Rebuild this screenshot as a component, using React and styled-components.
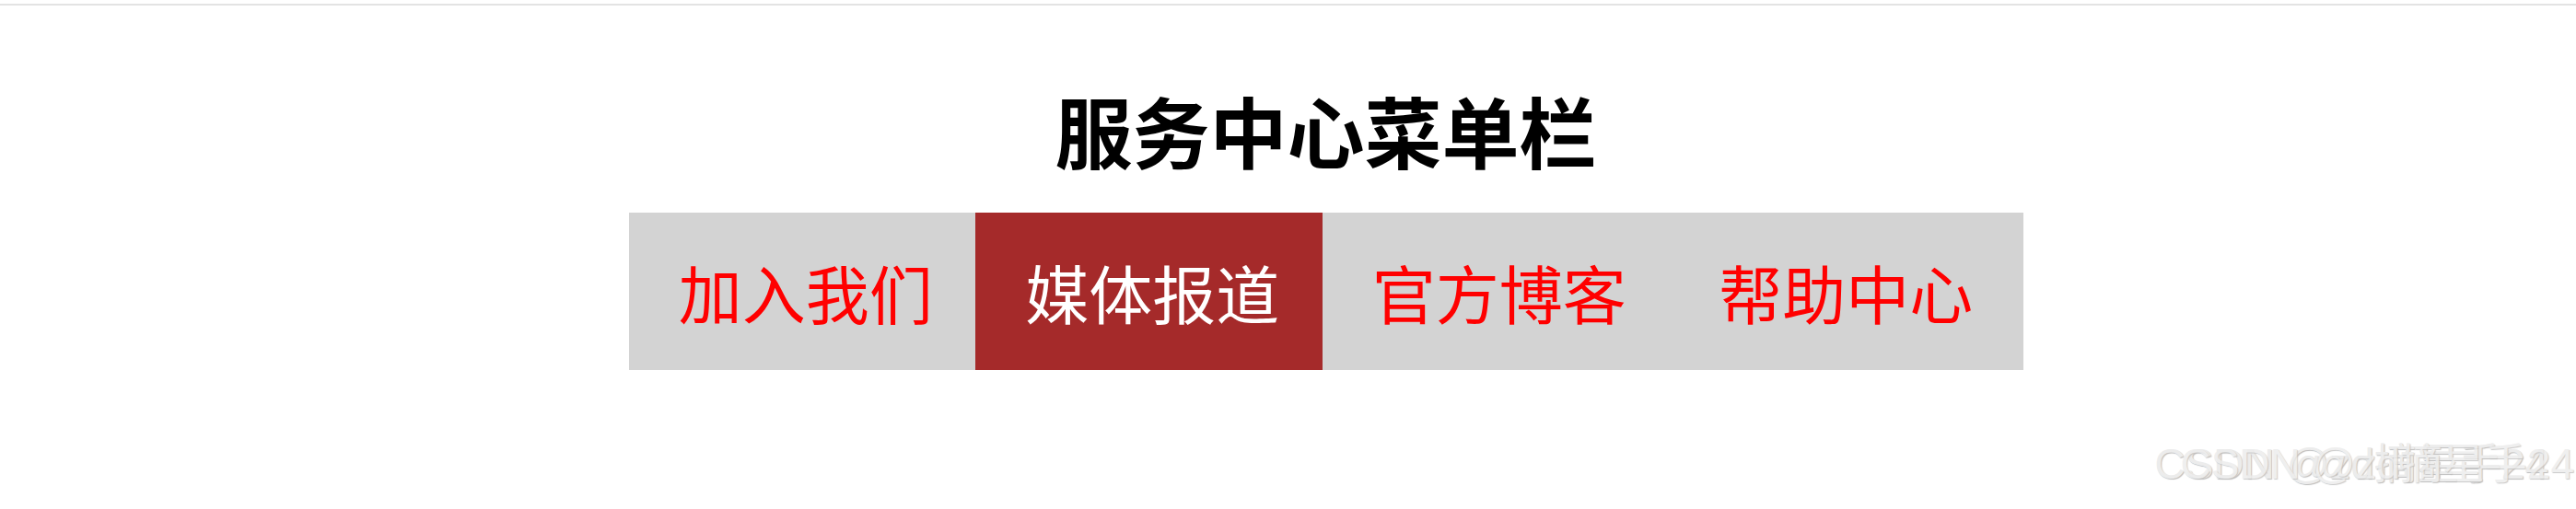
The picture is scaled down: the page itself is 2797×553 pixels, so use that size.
import React from "react";
import styled, { createGlobalStyle } from "styled-components";

const GlobalStyle = createGlobalStyle`
  html, body {
    margin: 0;
    padding: 0;
    background: #fff;
  }
  body {
    font-family: "Noto Sans CJK SC", "Noto Sans", sans-serif;
  }
  *, *::before, *::after {
    box-sizing: border-box;
  }
`;

const items = [
  { label: "加入我们" },
  { label: "媒体报道", active: true },
  { label: "官方博客" },
  { label: "帮助中心" },
];

const App = () => {
  return (
    <Page>
      <GlobalStyle />
      <TopRule />
      <Content>
        <Title>服务中心菜单栏</Title>
        <Menu>
          {items.map((item) => (
            <MenuItem key={item.label} $active={item.active}>
              {item.label}
            </MenuItem>
          ))}
        </Menu>
      </Content>
      <Watermark>
        <span>CSDN @zd摘星手24</span>
        <Ghost aria-hidden="true">CSDN @zd摘星手24</Ghost>
      </Watermark>
    </Page>
  );
};

const Page = styled.div`
  position: relative;
  width: 100%;
  height: 553px;
  overflow: hidden;
`;

const TopRule = styled.div`
  margin-top: 4px;
  height: 2px;
  background: #e3e3e3;
`;

const Content = styled.div`
  padding-left: 82px;
  display: flex;
  flex-direction: column;
  align-items: center;
`;

const Title = styled.h1`
  margin: 93px 0 0;
  font-size: 84px;
  line-height: 1;
  font-weight: bold;
  color: #000;
`;

const Menu = styled.ul`
  display: flex;
  width: 1514px;
  height: 171px;
  margin: 48px 0 0;
  padding: 0;
  list-style: none;
  background: #d3d3d3;
`;

const MenuItem = styled.li`
  flex: 0 0 376.5px;
  display: flex;
  align-items: center;
  justify-content: center;
  padding-left: 8px;
  font-size: 69px;
  color: ${(p) => (p.$active ? "#fff" : "#f00")};
  background: ${(p) => (p.$active ? "#a52a2a" : "transparent")};

  &:last-child {
    flex-grow: 1;
    padding-left: 0;
  }
`;

const Watermark = styled.div`
  position: absolute;
  right: 30px;
  bottom: 26px;
  font-family: "Liberation Sans", "Noto Sans CJK SC", sans-serif;
  font-size: 46px;
  line-height: 1;
  color: #ececec;
  text-shadow: 1px 1px 1px #bdbdbd;
  white-space: nowrap;
`;

const Ghost = styled.span`
  position: absolute;
  left: 28px;
  top: 0;
  opacity: 0.8;
`;

export default App;
